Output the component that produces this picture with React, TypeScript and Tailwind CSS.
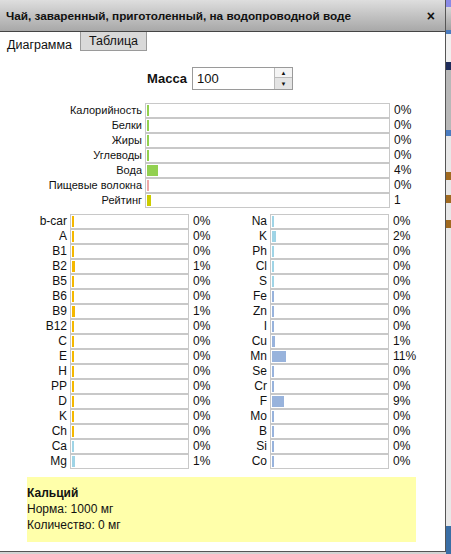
import React from "react";

type Row = { label: string; value: string; fill: number; color: string };

const macros: Row[] = [
  { label: "Калорийность", value: "0%", fill: 2, color: "bg-[#92d050]" },
  { label: "Белки", value: "0%", fill: 2, color: "bg-[#92d050]" },
  { label: "Жиры", value: "0%", fill: 2, color: "bg-[#92d050]" },
  { label: "Углеводы", value: "0%", fill: 2, color: "bg-[#92d050]" },
  { label: "Вода", value: "4%", fill: 11, color: "bg-[#92d050]" },
  { label: "Пищевые волокна", value: "0%", fill: 2, color: "bg-[#f0a8a8]" },
  { label: "Рейтинг", value: "1", fill: 4, color: "bg-[#cccc00]" },
];

const vit = "bg-[#f5b800]";
const lblue = "bg-[#9fd4e6]";
const sblue = "bg-[#98b3dc]";

const left: Row[] = [
  { label: "b-car", value: "0%", fill: 2, color: vit },
  { label: "A", value: "0%", fill: 2, color: vit },
  { label: "B1", value: "0%", fill: 2, color: vit },
  { label: "B2", value: "1%", fill: 3, color: vit },
  { label: "B5", value: "0%", fill: 2, color: vit },
  { label: "B6", value: "0%", fill: 2, color: vit },
  { label: "B9", value: "1%", fill: 3, color: vit },
  { label: "B12", value: "0%", fill: 2, color: vit },
  { label: "C", value: "0%", fill: 2, color: vit },
  { label: "E", value: "0%", fill: 2, color: vit },
  { label: "H", value: "0%", fill: 2, color: vit },
  { label: "PP", value: "0%", fill: 2, color: vit },
  { label: "D", value: "0%", fill: 2, color: vit },
  { label: "K", value: "0%", fill: 2, color: vit },
  { label: "Ch", value: "0%", fill: 2, color: vit },
  { label: "Ca", value: "0%", fill: 2, color: lblue },
  { label: "Mg", value: "1%", fill: 3, color: lblue },
];

const right: Row[] = [
  { label: "Na", value: "0%", fill: 2, color: lblue },
  { label: "K", value: "2%", fill: 4, color: lblue },
  { label: "Ph", value: "0%", fill: 2, color: lblue },
  { label: "Cl", value: "0%", fill: 2, color: lblue },
  { label: "S", value: "0%", fill: 2, color: lblue },
  { label: "Fe", value: "0%", fill: 2, color: sblue },
  { label: "Zn", value: "0%", fill: 2, color: sblue },
  { label: "I", value: "0%", fill: 2, color: sblue },
  { label: "Cu", value: "1%", fill: 3, color: sblue },
  { label: "Mn", value: "11%", fill: 14, color: sblue },
  { label: "Se", value: "0%", fill: 2, color: sblue },
  { label: "Cr", value: "0%", fill: 2, color: sblue },
  { label: "F", value: "9%", fill: 12, color: sblue },
  { label: "Mo", value: "0%", fill: 2, color: sblue },
  { label: "B", value: "0%", fill: 2, color: sblue },
  { label: "Si", value: "0%", fill: 2, color: sblue },
  { label: "Co", value: "0%", fill: 2, color: sblue },
];

function BarRow({ row, labelW, barW, small }: { row: Row; labelW: string; barW: string; small?: boolean }) {
  return (
    <div className="flex h-[15px] items-center">
      <div className={`${labelW} shrink-0 pr-[3px] text-right leading-[15px] ${small ? "text-[11px]" : ""}`}>
        {row.label}
      </div>
      <div className={`${barW} h-[15px] shrink-0 border border-[#c8c8c8] bg-white py-[1px] pl-[1px]`}>
        <div className={`h-full ${row.color}`} style={{ width: row.fill }} />
      </div>
      <div className="pl-[4px] leading-[15px]">{row.value}</div>
    </div>
  );
}

export default function App() {
  return (
    <div className="flex h-[554px] w-[451px] bg-[#d4d4d4] font-['Liberation_Sans',Arial,sans-serif] text-[12px] text-[#111]">
      <div className="flex h-[552px] w-[446px] shrink-0 flex-col border-r border-b border-[#555] bg-white">
        <div className="flex h-[32px] shrink-0 items-center justify-between border-b border-[#444] bg-gradient-to-b from-[#dedede] to-[#a8a8a8] pr-[10px] pl-[6px]">
          <span className="text-[11.75px] font-bold">Чай, заваренный, приготоленный, на водопроводной воде</span>
          <span className="text-[14px] font-bold leading-none">×</span>
        </div>
        <div className="flex h-[22px] shrink-0 items-start text-[12.5px]">
          <div className="w-[80px] pt-[6px] pl-[7px] leading-[15px]">Диаграмма</div>
          <div className="h-[19px] w-[67px] border-x border-b border-[#9a9a9a] bg-[#d9d9d9] pt-[2px] text-center leading-[15px]">Таблица</div>
        </div>
        <div className="mt-[13px] flex items-center pl-[147px]">
          <span className="w-[45px] text-[13px] font-bold">Масса</span>
          <div className="flex h-[23px] w-[101px] border border-[#9a9a9a]">
            <div className="flex-1 pl-[4px] text-[13px] leading-[21px]">100</div>
            <div className="flex w-[18px] flex-col border-l border-[#bbb]">
              <div className="flex h-[10px] items-center justify-center border-b border-[#bbb] bg-[#f4f4f4] text-[6px] leading-none">▲</div>
              <div className="flex flex-1 items-center justify-center bg-[#e4e4e4] text-[6px] leading-none">▼</div>
            </div>
          </div>
        </div>
        <div className="mt-[13px] flex flex-col">
          {macros.map((r) => (
            <BarRow key={r.label} row={r} labelW="w-[145px]" barW="w-[245px]" small />
          ))}
        </div>
        <div className="mt-[6px] flex">
          <div className="flex w-[200px] flex-col">
            {left.map((r) => (
              <BarRow key={r.label} row={r} labelW="w-[70px]" barW="w-[119px]" />
            ))}
          </div>
          <div className="flex flex-col">
            {right.map((r) => (
              <BarRow key={r.label} row={r} labelW="w-[70px]" barW="w-[119px]" />
            ))}
          </div>
        </div>
        <div className="mt-[8px] ml-[27px] h-[65px] w-[389px] bg-[#ffffaa] pt-[8px] leading-[16px]">
          <div className="font-bold">Кальций</div>
          <div>Норма: 1000 мг</div>
          <div>Количество: 0 мг</div>
        </div>
      </div>
      <div className="flex flex-1 flex-col">
        <div className="h-[7px] bg-[#8a8ae6]" />
        <div className="h-[23px] bg-gradient-to-b from-[#d8d8d8] to-[#a0a0a0]" />
        <div className="h-[4px] bg-[#4a7cc0]" />
        <div className="h-[28px] bg-[#f0f0f0]" />
        <div className="h-[8px] bg-[#1e2c5a]" />
        <div className="h-[60px] bg-[#b8b8b8]" />
        <div className="h-[6px] bg-[#4a7cc0]" />
        <div className="h-[36px] bg-[#e8e8e8]" />
        <div className="h-[8px] bg-[#a06a20]" />
        <div className="h-[15px] bg-[#e8e8e8]" />
        <div className="h-[8px] bg-[#a06a20]" />
        <div className="h-[17px] bg-[#e8e8e8]" />
        <div className="h-[8px] bg-[#a06a20]" />
        <div className="flex-1 bg-[#e8e8e8]" />
        <div className="h-[28px] bg-[#3a6ea5]" />
      </div>
    </div>
  );
}
